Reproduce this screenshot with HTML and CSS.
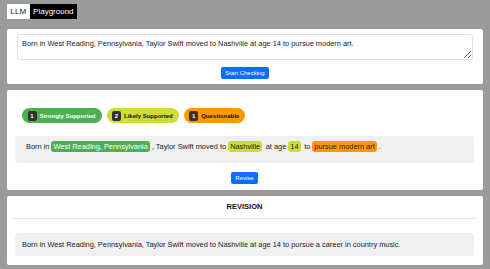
FILE: index.html
```html
<!DOCTYPE html>
<html>
<head>
<meta charset="utf-8">
<link rel="stylesheet" href="styles.css">
</head>
<body>
<header class="brand"><span class="brand-llm">LLM</span><span class="brand-play">Playground</span></header>

<section class="card input-card">
  <textarea class="claim-input">Born in West Reading, Pennsylvania, Taylor Swift moved to Nashville at age 14 to pursue modern art.</textarea>
  <div class="actions"><button class="btn">Start Checking</button></div>
</section>

<section class="card result-card">
  <div class="legend">
    <span class="pill pill-strong"><span class="count">1</span>Strongly Supported</span>
    <span class="pill pill-likely"><span class="count">2</span>Likely Supported</span>
    <span class="pill pill-quest"><span class="count">1</span>Questionable</span>
  </div>
  <div class="result-box">Born in <span class="hl hl-strong">West Reading, Pennsylvania</span> , Taylor Swift moved to <span class="hl hl-likely">Nashville</span> <span class="gap"></span>at age <span class="hl hl-likely">14</span> <span class="gap"></span>to <span class="hl hl-quest">pursue modern art</span> .</div>
  <div class="actions"><button class="btn">Revise</button></div>
</section>

<section class="card revision-card">
  <h2 class="rev-title">REVISION</h2>
  <hr class="rev-rule">
  <div class="rev-box">Born in West Reading, Pennsylvania, Taylor Swift moved to Nashville at age 14 to pursue a career in country music.</div>
</section>
</body>
</html>
```

FILE: styles.css
```css
html, body {
  margin: 0;
  padding: 0;
}
body {
  background: #9b9b9b;
  font-family: "Liberation Sans", Arial, sans-serif;
  font-size: 7.4px;
  color: #222;
  padding: 4px 7px 0 7px;
  height: 269px;
  box-sizing: border-box;
  overflow: hidden;
}
.brand {
  display: flex;
  height: 15px;
  font-size: 8px;
}
.brand-llm {
  background: #fff;
  color: #111;
  padding: 0 3.5px;
  line-height: 15px;
}
.brand-play {
  background: #000;
  color: #fff;
  padding: 0 3.5px;
  line-height: 15px;
}
.card {
  background: #fff;
  border-radius: 2px;
  margin-top: 6px;
}
.input-card {
  margin-top: 10px;
  padding: 5px 10px 5px 10px;
  height: 55px;
  box-sizing: border-box;
}
.claim-input {
  display: block;
  width: 100%;
  height: 26px;
  box-sizing: border-box;
  border: 1px solid #e2e2e2;
  border-radius: 2px;
  font-family: inherit;
  font-size: 7.4px;
  color: #222;
  padding: 4px 4px;
  resize: vertical;
  margin: 0;
}
.actions {
  display: flex;
  justify-content: center;
  margin-top: 7px;
}
.btn {
  background: #0d6efd;
  color: #fff;
  border: none;
  border-radius: 2px;
  font-family: inherit;
  font-size: 6px;
  height: 12px;
  padding: 0 4.5px;
  margin: 0;
}
.result-card {
  height: 100px;
  box-sizing: border-box;
  padding: 18px 9px 0 8px;
}
.legend {
  display: flex;
  gap: 5px;
  padding-left: 7px;
}
.pill {
  display: inline-flex;
  align-items: center;
  height: 15px;
  border-radius: 8px;
  padding: 0 6px 0 5.5px;
  font-weight: bold;
  font-size: 6px;
}
.count {
  display: inline-block;
  background: #333;
  color: #fff;
  width: 9px;
  height: 10px;
  line-height: 10px;
  text-align: center;
  border-radius: 2px;
  margin-right: 3px;
}
.pill-strong { background: #4caf50; color: #fff; }
.pill-likely { background: #cddc39; color: #111; }
.pill-quest { background: #ff9800; color: #111; }
.result-box {
  margin-top: 13px;
  background: #f0f0f0;
  border-radius: 3px;
  height: 27px;
  box-sizing: border-box;
  padding: 0 11px;
  line-height: 22px;
  white-space: nowrap;
}
.gap {
  display: inline-block;
  width: 1.5px;
}
.hl {
  padding: 1px 2px;
  border-radius: 3px;
}
.hl-strong { background: #4caf50; color: #fff; }
.hl-likely { background: #cddc39; color: #222; }
.hl-quest { background: #ff9800; color: #222; }
.result-card .actions { margin-top: 9px; }
.revision-card {
  height: 69px;
  box-sizing: border-box;
  padding: 6px 6px 0 5px;
}
.rev-title {
  margin: 0;
  text-align: center;
  font-size: 7.5px;
  line-height: 10px;
  font-weight: bold;
  color: #111;
}
.rev-rule {
  border: none;
  border-top: 1px solid #e4e4e4;
  margin: 6px 0 0 0;
}
.rev-box {
  margin: 14px 3px 0 3px;
  background: #f0f0f0;
  border-radius: 3px;
  height: 23px;
  line-height: 23px;
  padding: 0 7px;
}
```
